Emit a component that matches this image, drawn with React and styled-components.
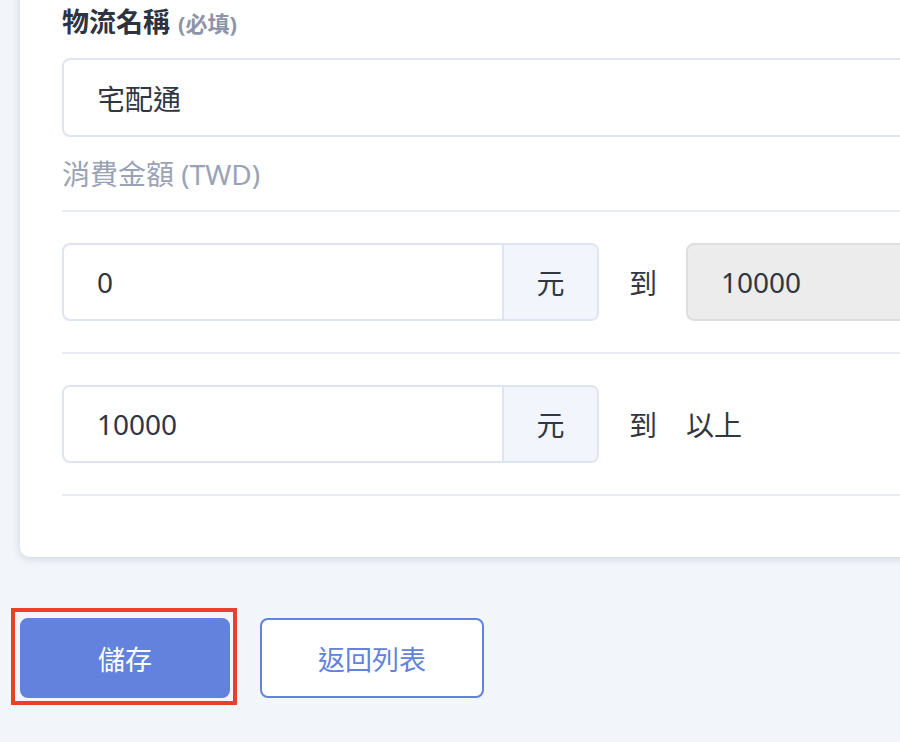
import styled, { createGlobalStyle } from "styled-components"

const GlobalStyle = createGlobalStyle`
  html, body {
    margin: 0;
    padding: 0;
    background: #f2f5fa;
    overflow: hidden;
  }
  body {
    font-family: "Noto Sans", "Noto Sans CJK TC", sans-serif;
    color: #2f3542;
  }
`

const Page = styled.div`
  width: 900px;
  height: 742px;
  overflow: hidden;
  padding: 0 0 0 20px;
  box-sizing: border-box;
`

const Card = styled.section`
  width: 1000px;
  margin-top: -30px;
  background: #fff;
  border-radius: 10px;
  box-shadow: 0 2px 8px rgba(40, 52, 80, 0.16);
  padding: 37px 42px 61px;
  box-sizing: border-box;
`

const Label = styled.div`
  height: 30px;
  font-size: 27px;
  line-height: 30px;
  font-weight: 700;
  color: #2d3340;
  display: flex;
  align-items: baseline;
  gap: 8px;
`

const Hint = styled.span`
  font-size: 22px;
  font-weight: 700;
  color: #8c94a8;
`

const Input = styled.div`
  height: 79px;
  margin-top: 21px;
  box-sizing: border-box;
  border: 2px solid #dde4f2;
  border-radius: 8px;
  padding: 0 33px;
  display: flex;
  align-items: center;
  font-size: 28px;
  color: #303642;
  background: ${(p) => (p.disabled ? "#ececec" : "#fff")};
  border-color: ${(p) => (p.disabled ? "#dedede" : "#dde4f2")};
`

const SubLabel = styled.div`
  margin-top: 21px;
  font-size: 28px;
  line-height: 32px;
  color: #9aa2b6;
  padding-bottom: 20px;
  border-bottom: 2px solid #e8ecf4;
`

const Row = styled.div`
  display: flex;
  align-items: center;
  padding: 31px 0;
  border-bottom: 2px solid #e8ecf4;
`

const Group = styled.div`
  display: flex;
  flex-shrink: 0;
  width: 537px;
  height: 78px;
  box-sizing: border-box;
  border: 2px solid #dde4f2;
  border-radius: 8px;
  overflow: hidden;
`

const GroupField = styled.div`
  flex: 1;
  display: flex;
  align-items: center;
  padding: 0 33px;
  font-size: 28px;
  color: #303642;
`

const Addon = styled.div`
  width: 93px;
  border-left: 2px solid #dde4f2;
  background: #f2f5fc;
  display: flex;
  align-items: center;
  justify-content: center;
  font-size: 28px;
  color: #303642;
`

const To = styled.span`
  margin: 0 29px 0 30px;
  font-size: 28px;
  color: #303642;
`

const RangeEnd = styled(Input)`
  margin-top: 0;
  height: 78px;
  width: 400px;
  flex-shrink: 0;
`

const Plain = styled.span`
  font-size: 28px;
  color: #303642;
`

const Actions = styled.div`
  display: flex;
  gap: 30px;
  margin-top: 61px;
`

const Button = styled.button`
  position: relative;
  height: 80px;
  width: ${(p) => p.w}px;
  border-radius: 8px;
  font-family: inherit;
  font-size: 27px;
  cursor: pointer;
  box-sizing: border-box;
  border: 2px solid #6282dd;
  background: ${(p) => (p.primary ? "#6282dd" : "#fff")};
  color: ${(p) => (p.primary ? "#fff" : "#6282dd")};

  &::after {
    content: "";
    display: ${(p) => (p.focused ? "block" : "none")};
    position: absolute;
    inset: -12px -9px -9px -11px;
    border: 4px solid #e8412a;
  }
`

function App() {
  const rows = [
    { from: "0", to: "10000" },
    { from: "10000", to: null },
  ]
  return (
    <Page>
      <GlobalStyle />
      <Card>
        <Label>
          物流名稱 <Hint>(必填)</Hint>
        </Label>
        <Input>宅配通</Input>
        <SubLabel>消費金額 (TWD)</SubLabel>
        {rows.map((r, i) => (
          <Row key={`row-${i}`}>
            <Group>
              <GroupField>{r.from}</GroupField>
              <Addon>元</Addon>
            </Group>
            <To>到</To>
            {r.to ? <RangeEnd disabled>{r.to}</RangeEnd> : <Plain>以上</Plain>}
          </Row>
        ))}
      </Card>
      <Actions>
        <Button primary focused w={210}>儲存</Button>
        <Button w={224}>返回列表</Button>
      </Actions>
    </Page>
  )
}

export default App
